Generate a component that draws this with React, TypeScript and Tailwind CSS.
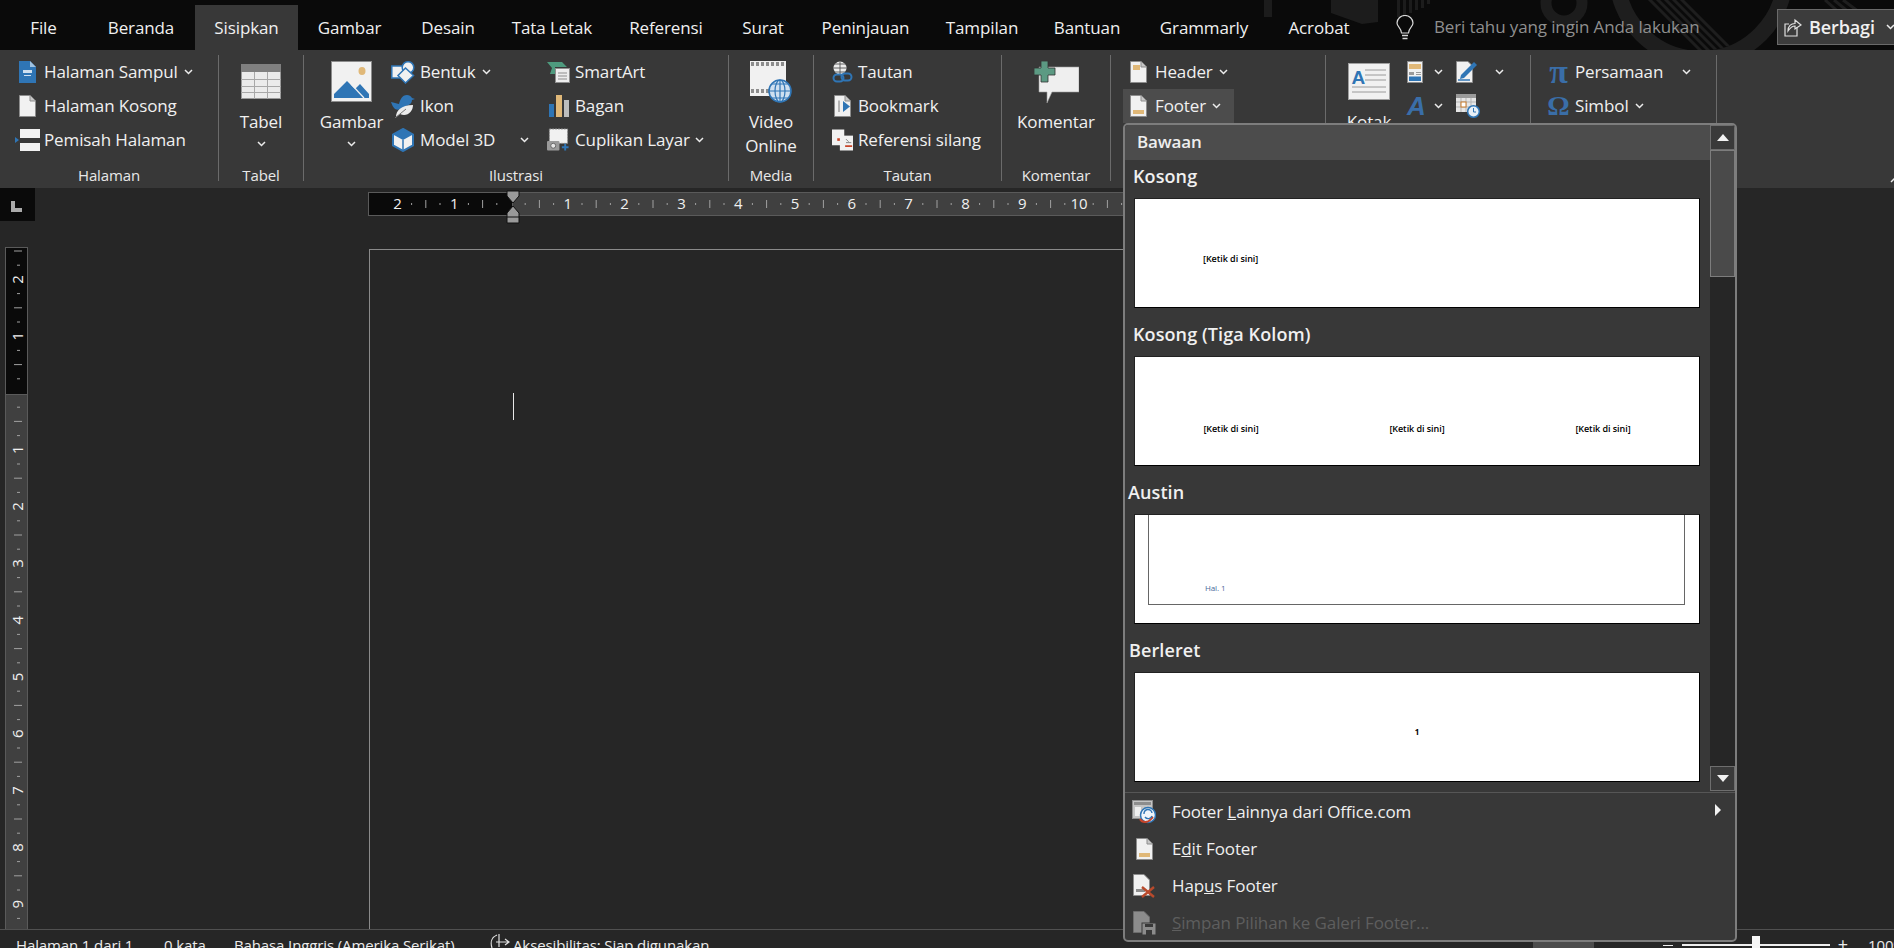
import React from "react";

const Chev = ({ className = "" }: { className?: string }) => (
  <svg width="9" height="6" viewBox="0 0 9 6" className={"shrink-0 " + className}>
    <polyline points="1,1 4.5,4.5 8,1" fill="none" stroke="#ececec" strokeWidth="1.5" />
  </svg>
);

const Sep = () => <div className="w-px shrink-0 mt-[5px] mb-[7px] bg-[#6b6b6b]" />;

const PageBase = ({ children }: { children?: React.ReactNode }) => (
  <svg width="17" height="22" viewBox="0 0 17 22">
    <path d="M0.5 0.5H11L16.5 6V21.5H0.5Z" fill="#f1f1f1" stroke="#8d8d8d" />
    <path d="M11 0.5V6H16.5" fill="#c8c8c8" stroke="#8d8d8d" />
    {children}
  </svg>
);

const CoverIcon = () => (
  <svg width="17" height="22" viewBox="0 0 17 22">
    <path d="M0 0H11L17 6V22H0Z" fill="#2f75b5" />
    <path d="M11 0V6H17Z" fill="#9fc1e0" />
    <rect x="4" y="9" width="9" height="3" fill="#cfe0f0" />
    <rect x="5" y="14" width="7" height="1" fill="#cfe0f0" />
  </svg>
);
const BreakIcon = () => (
  <svg width="25" height="22" viewBox="0 0 25 22">
    <path d="M0 8L4 11L0 14Z" fill="#2f75b5" />
    <rect x="5" y="0" width="20" height="9" fill="#f1f1f1" />
    <rect x="5" y="14" width="20" height="8" fill="#f1f1f1" />
  </svg>
);
const TableIcon = () => (
  <svg width="40" height="35" viewBox="0 0 40 35">
    <rect x="0.5" y="0.5" width="39" height="34" fill="#ebebeb" stroke="#9a9a9a" />
    <rect x="0" y="0" width="40" height="8" fill="#7f7f7f" />
    <path d="M13.5 8V35M26.5 8V35M0 15.5H40M0 22.5H40M0 28.5H40" stroke="#a8a8a8" fill="none" />
  </svg>
);
const PictureIcon = () => (
  <svg width="41" height="41" viewBox="0 0 41 41">
    <rect x="0.5" y="0.5" width="40" height="40" fill="#f1f1f1" stroke="#8d8d8d" />
    <ellipse cx="31" cy="10" rx="3.5" ry="4" fill="#e0b878" />
    <path d="M3 37V33L16 20L24 28L29 23L38 33V37Z" fill="#2f75b5" />
    <path d="M20 23L33 37" stroke="#f1f1f1" strokeWidth="1.2" />
  </svg>
);
const ShapesIcon = () => (
  <svg width="24" height="23" viewBox="0 0 24 23">
    <rect x="0.8" y="5" width="12" height="12" fill="#f1f1f1" stroke="#2f75b5" strokeWidth="1.5" />
    <circle cx="17" cy="6.5" r="5.8" fill="#f1f1f1" stroke="#2f75b5" strokeWidth="1.5" />
    <path d="M14.5 7L22.5 14.5L14.5 22L7 14.5Z" fill="#f1f1f1" stroke="#2f75b5" strokeWidth="1.5" />
  </svg>
);
const BirdIcon = () => (
  <svg width="24" height="24" viewBox="0 0 24 24">
    <path d="M0 8C3 9 5 9 8 10C9 6 11 1 16 1C18 1 20 2 21 4L24 5L21 6C21 9 19 11 15 12C12 15 7 17 4 15C2 13 1 11 0 8Z" fill="#2f75b5" />
    <path d="M5 23C5 17 10 11 22 11C22 18 16 23 9 20Z" fill="#ececec" />
    <path d="M4 24L15 15" stroke="#777" strokeWidth="1" />
  </svg>
);
const CubeIcon = () => (
  <svg width="22" height="24" viewBox="0 0 22 24">
    <path d="M11 1L21 6.5V17.5L11 23L1 17.5V6.5Z" fill="#f1f1f1" stroke="#2f75b5" strokeWidth="2" />
    <path d="M11 1L21 6.5L11 12L1 6.5Z" fill="#2f75b5" />
    <path d="M11 12V23" stroke="#2f75b5" strokeWidth="1.5" />
  </svg>
);
const SmartArtIcon = () => (
  <svg width="23" height="22" viewBox="0 0 23 22">
    <path d="M0 1H15L20 6H8V13H3L5 7Z" fill="#4e9a7e" />
    <rect x="8.5" y="7.5" width="14" height="14" fill="#ededed" stroke="#8d8d8d" />
    <path d="M11 12H20M11 15H20M11 18H20" stroke="#8d8d8d" />
  </svg>
);
const ChartIcon = () => (
  <svg width="20" height="22" viewBox="0 0 20 22">
    <rect x="0" y="9" width="5" height="13" fill="#2f75b5" />
    <rect x="7" y="0" width="6" height="22" fill="#e0b878" />
    <rect x="15" y="5" width="5" height="17" fill="#bdbdbd" />
  </svg>
);
const ScreenIcon = () => (
  <svg width="24" height="24" viewBox="0 0 24 24">
    <rect x="2.5" y="0.5" width="19" height="15" fill="#f1f1f1" stroke="#8d8d8d" strokeDasharray="2 1" />
    <rect x="0" y="13" width="13" height="10" rx="1" fill="#9a9a9a" />
    <circle cx="6.5" cy="18" r="2.6" fill="#e5e5e5" stroke="#666" />
    <path d="M19 16V23M15.5 19.5H22.5" stroke="#2f75b5" strokeWidth="2" />
  </svg>
);
const VideoIcon = () => (
  <svg width="42" height="42" viewBox="0 0 42 42">
    <rect x="0" y="0" width="36" height="35" fill="#f1f1f1" />
    <path d="M1 3H35M1 30H35" stroke="#8d8d8d" strokeWidth="4" strokeDasharray="3 2" />
    <circle cx="30" cy="30" r="11" fill="#cfe0f0" stroke="#2f75b5" strokeWidth="1.6" />
    <path d="M19 30H41M30 19V41M22 23H38M22 37H38" stroke="#2f75b5" strokeWidth="1.2" />
    <ellipse cx="30" cy="30" rx="5" ry="11" fill="none" stroke="#2f75b5" strokeWidth="1.2" />
  </svg>
);
const LinkIcon = () => (
  <svg width="21" height="23" viewBox="0 0 21 23">
    <circle cx="8" cy="7" r="6.5" fill="#ececec" />
    <path d="M1.5 7H14.5M8 0.5V13.5M3 3H13M3 11H13" stroke="#555" strokeWidth="0.9" />
    <rect x="1.5" y="13.5" width="10" height="7" rx="3.5" fill="none" stroke="#2f75b5" strokeWidth="2" />
    <rect x="9.5" y="13.5" width="10" height="7" rx="3.5" fill="none" stroke="#2f75b5" strokeWidth="2" transform="translate(0 -1)" />
  </svg>
);
const BookmarkIcon = () => (
  <svg width="17" height="22" viewBox="0 0 17 22">
    <path d="M0.5 0.5H11L16.5 6V21.5H0.5Z" fill="#f1f1f1" stroke="#8d8d8d" />
    <path d="M11 0.5V6H16.5" fill="#c8c8c8" stroke="#8d8d8d" />
    <path d="M5 5.5V17" stroke="#777" />
    <path d="M9 6L16 11.5L9 17Z" fill="#2f75b5" />
  </svg>
);
const CrossRefIcon = () => (
  <svg width="24" height="24" viewBox="0 0 24 24">
    <rect x="0" y="0" width="14" height="18" fill="#f1f1f1" />
    <rect x="6" y="10" width="6" height="3" fill="#c8452a" />
    <path d="M9 7H24V24H9Z" fill="#f1f1f1" />
    <path d="M16 11L19 14M16 15H22" stroke="#777" />
    <rect x="15" y="18" width="8" height="2" fill="#c8452a" />
  </svg>
);
const CommentIcon = () => (
  <svg width="45" height="42" viewBox="0 0 45 42">
    <path d="M5 6H45V31H18L13 42V31H5Z" fill="#efefef" stroke="#9a9a9a" strokeWidth="0.6" strokeLinejoin="round" />
    <path d="M7 0H14V7H21V14H14V21H7V14H0V7H7Z" fill="#5c9a83" stroke="#333" strokeWidth="0.8" />
  </svg>
);
const HeaderIcon = () => (
  <PageBase>
    <rect x="3" y="4" width="7" height="5" fill="#e0b878" />
  </PageBase>
);
const FooterIcon = () => (
  <PageBase>
    <rect x="3" y="15" width="11" height="4" fill="#e0b878" />
  </PageBase>
);
const TextBoxIcon = () => (
  <svg width="42" height="37" viewBox="0 0 42 37">
    <rect x="0.5" y="0.5" width="41" height="36" fill="#f1f1f1" stroke="#a0a0a0" />
    <path d="M17 7H38M17 12H38M17 17H38M4 24H38M4 29H38" stroke="#9a9a9a" />
    <text x="3.5" y="21" className="fill-[#2f75b5] text-[19px] font-bold font-['Liberation_Sans',sans-serif]">A</text>
  </svg>
);
const QuickIcon = () => (
  <svg width="16" height="22" viewBox="0 0 16 22">
    <rect x="0.5" y="0.5" width="15" height="21" fill="#f1f1f1" stroke="#8d8d8d" />
    <rect x="2" y="3" width="12" height="5" fill="#e0b878" />
    <path d="M2 11H7V14H2ZM9 11H14V12H9ZM9 13H14V14H9Z" fill="#9a9a9a" />
    <rect x="2" y="15.5" width="12" height="4.5" fill="#2f75b5" />
  </svg>
);
const SignIcon = () => (
  <svg width="22" height="22" viewBox="0 0 22 22">
    <path d="M0.5 0.5H12L16.5 5V21.5H0.5Z" fill="#f1f1f1" stroke="#8d8d8d" />
    <path d="M5 14L18 1L21 4L8 17L4 18Z" fill="#2f75b5" />
    <path d="M2 19H14" stroke="#2f75b5" strokeWidth="1.5" />
  </svg>
);
const DateIcon = () => (
  <svg width="24" height="24" viewBox="0 0 24 24">
    <rect x="0" y="0" width="20" height="18" fill="#e6e6e6" />
    <rect x="0" y="0" width="20" height="4" fill="#9a9a9a" />
    <path d="M5 4V18M10 4V18M15 4V18M0 8H20M0 13H20" stroke="#b5b5b5" />
    <rect x="5" y="8" width="5" height="5" fill="#fff" stroke="#c87a2a" />
    <circle cx="17.5" cy="17.5" r="5.8" fill="#e8f0f8" stroke="#2f75b5" strokeWidth="1.5" />
    <path d="M17.5 14V18H20" stroke="#2f75b5" fill="none" />
  </svg>
);
const Bulb = () => (
  <svg width="18" height="25" viewBox="0 0 18 25" fill="none" stroke="#d8d8d8" strokeWidth="1.2">
    <path d="M5.5 18C5.5 13 1 12 1 8A8 7.5 0 0 1 17 8C17 12 12.5 13 12.5 18Z" />
    <path d="M6 20.5H12M6.5 23.5H11.5" strokeWidth="1.6" />
  </svg>
);
const ShareIcon = () => (
  <svg width="18" height="20" viewBox="0 0 18 20" fill="none" stroke="#e0e0e0" strokeWidth="1.2">
    <path d="M13 10V19H1V7H5" />
    <path d="M4 14C4 9 7 6.5 11 6.5V3L17 8L11 12V9C8 9 6 11 4 14Z" />
  </svg>
);
const StoreIcon = () => (
  <svg width="24" height="24" viewBox="0 0 24 24">
    <rect x="0.5" y="0.5" width="20" height="18" fill="#c4c4c4" stroke="#8d8d8d" />
    <rect x="2" y="2" width="17" height="3" fill="#8d8d8d" />
    <rect x="3" y="7" width="6" height="9" fill="#efefef" />
    <circle cx="16" cy="15" r="7.5" fill="#f0f5fa" stroke="#2f75b5" strokeWidth="1.5" />
    <path d="M8 19C10 23 16 23 19 19L21 17" stroke="#c8452a" strokeWidth="2" fill="none" />
    <path d="M12 14A4 4 0 0 1 20 13M20 16A4 4 0 0 1 13 17" stroke="#2f75b5" strokeWidth="1.4" fill="none" />
  </svg>
);
const FooterXIcon = () => (
  <svg width="23" height="24" viewBox="0 0 23 24">
    <path d="M0.5 0.5H11L16.5 6V21.5H0.5Z" fill="#f1f1f1" stroke="#8d8d8d" />
    <rect x="3" y="15" width="9" height="3" fill="#8d8d8d" />
    <path d="M9 13L21 23M21 13L9 23" stroke="#b84a2c" strokeWidth="2.4" />
  </svg>
);
const FooterSaveIcon = () => (
  <svg width="23" height="24" viewBox="0 0 23 24">
    <path d="M0.5 0.5H11L16.5 6V21.5H0.5Z" fill="#8c8c8c" stroke="#6d6d6d" />
    <rect x="9" y="12" width="14" height="12" fill="#8c8c8c" stroke="#383838" />
    <rect x="12" y="13" width="8" height="3" fill="#383838" />
    <rect x="13" y="19" width="6" height="5" fill="#383838" />
  </svg>
);
const TriUp = () => (
  <svg width="12" height="7" viewBox="0 0 12 7"><path d="M0 7L6 0L12 7Z" fill="#f2f2f2" /></svg>
);
const TriDown = () => (
  <svg width="12" height="7" viewBox="0 0 12 7"><path d="M0 0L6 7L12 0Z" fill="#f2f2f2" /></svg>
);

const tabs: [string, string][] = [
  ["File", "w-[87px]"],
  ["Beranda", "w-[108px]"],
  ["Sisipkan", "w-[103px] bg-[#383838]"],
  ["Gambar", "w-[103px]"],
  ["Desain", "w-[94px]"],
  ["Tata Letak", "w-[114px]"],
  ["Referensi", "w-[114px]"],
  ["Surat", "w-[80px] mr-[8px]"],
  ["Peninjauan", "w-[109px]"],
  ["Tampilan", "w-[124px]"],
  ["Bantuan", "w-[86px]"],
  ["Grammarly", "w-[148px]"],
  ["Acrobat", "w-[82px]"],
];

const Row = ({
  slot,
  icon,
  label,
  children,
  className = "",
}: {
  slot: string;
  icon: React.ReactNode;
  label: string;
  children?: React.ReactNode;
  className?: string;
}) => (
  <div className={"flex items-center h-[34px] whitespace-nowrap " + className}>
    <div className={"flex justify-center items-center shrink-0 " + slot}>{icon}</div>
    <span>{label}</span>
    {children}
  </div>
);

const Big = ({
  icon,
  lines,
  chev,
  className = "",
}: {
  icon: React.ReactNode;
  lines: string[];
  chev?: boolean;
  className?: string;
}) => (
  <div className={"flex flex-col items-center shrink-0 " + className}>
    <div className="h-[53px] mb-[2px] flex items-center justify-center">{icon}</div>
    {lines.map((l) => (
      <div key={l} className="leading-[24px] h-[24px] whitespace-nowrap">{l}</div>
    ))}
    {chev && (
      <div className="h-[20px] flex items-center">
        <Chev />
      </div>
    )}
  </div>
);

const Group = ({
  width,
  label,
  children,
}: {
  width: string;
  label?: string;
  children: React.ReactNode;
}) => (
  <div className={"shrink-0 flex flex-col h-full " + width}>
    <div className="flex-1 flex pt-[5px] min-h-0">{children}</div>
    <div className="h-[24px] leading-[22px] text-center text-[15px] text-[#e8e8e8]">{label}</div>
  </div>
);

const HRuler = () => {
  const zero = 143;
  const step = 56.8;
  const marks = [];
  for (let q = -8; q <= 44; q++) {
    const x = zero + (q * step) / 4;
    if (x < 0) continue;
    if (q % 4 === 0) {
      const n = Math.abs(q / 4);
      if (n > 0) {
        marks.push(
          <text key={q} x={x} y={17} textAnchor="middle" className="fill-[#f0f0f0] text-[15px]">
            {n}
          </text>
        );
      }
    } else if (q % 2 === 0) {
      marks.push(<line key={q} x1={x} x2={x} y1={8} y2={16} stroke="#a0a0a0" />);
    } else {
      marks.push(<line key={q} x1={x} x2={x} y1={11} y2={13} stroke="#a0a0a0" />);
    }
  }
  return (
    <svg width="800" height="24" viewBox="0 0 800 24" className="block">
      <rect x="0.5" y="0.5" width="799" height="23" fill="#404040" stroke="#5a5a5a" />
      <rect x="0.5" y="0.5" width="144" height="23" fill="#0a0a0a" stroke="#5a5a5a" />
      {marks}
    </svg>
  );
};

const VRuler = () => {
  const zero = 146;
  const step = 56.8;
  const marks = [];
  for (let q = -10; q <= 40; q++) {
    const y = zero + (q * step) / 4;
    if (y < 0 || y > 682) continue;
    if (q % 4 === 0) {
      const n = Math.abs(q / 4);
      if (n > 0) {
        marks.push(
          <text
            key={q}
            x={12}
            y={y}
            textAnchor="middle"
            dominantBaseline="central"
            transform={`rotate(-90 12 ${y})`}
            className="fill-[#f0f0f0] text-[15px]"
          >
            {n}
          </text>
        );
      }
    } else if (q % 2 === 0) {
      marks.push(<line key={q} x1={9} x2={17} y1={y} y2={y} stroke="#a0a0a0" />);
    } else {
      marks.push(<line key={q} x1={12} x2={15} y1={y} y2={y} stroke="#a0a0a0" />);
    }
  }
  return (
    <svg width="23" height="682" viewBox="0 0 23 682" className="block">
      <rect x="0.5" y="0.5" width="22" height="700" fill="#404040" stroke="#5a5a5a" />
      <rect x="0.5" y="0.5" width="22" height="147" fill="#0a0a0a" stroke="#5a5a5a" />
      {marks}
    </svg>
  );
};

const Section = ({
  title,
  first,
  pl,
  children,
}: {
  title: string;
  first?: boolean;
  pl: string;
  children: React.ReactNode;
}) => (
  <div>
    <div
      className={
        "flex items-center font-semibold text-[18px] tracking-[0.1px] text-[#f0f0f0] " +
        pl +
        (first ? " h-[38px] pb-[5px]" : " h-[48px] pt-[4px]")
      }
    >
      {title}
    </div>
    <div className="ml-[9px] w-[566px] h-[110px] bg-white border-b border-r border-l border-t border-l-[#222] border-t-[#222] border-r-black border-b-black text-black overflow-hidden">
      {children}
    </div>
  </div>
);

const MenuItem = ({
  icon,
  children,
  disabled,
  arrow,
}: {
  icon: React.ReactNode;
  children: React.ReactNode;
  disabled?: boolean;
  arrow?: boolean;
}) => (
  <div className={"flex items-center h-[37px] shrink-0 text-[17px] " + (disabled ? "text-[#5e5e5e]" : "text-[#efefef]")}>
    <div className="w-[24px] ml-[7px] mr-[16px] flex justify-center shrink-0">{icon}</div>
    <span>{children}</span>
    {arrow && (
      <svg width="6" height="12" viewBox="0 0 6 12" className="ml-auto mr-[14px] mb-[4px]">
        <path d="M0 0L6 6L0 12Z" fill="#f2f2f2" />
      </svg>
    )}
  </div>
);

const Dropdown = () => (
  <div className="absolute left-[1123px] top-[123px] w-[614px] h-[819px] border-2 border-[#7d7d7d] rounded-[5px] bg-[#383838] flex flex-col overflow-hidden z-10">
    <div className="flex h-[667px] shrink-0">
      <div className="w-[585px] shrink-0 overflow-hidden">
        <div className="h-[35px] bg-[#4c4c4c] flex items-center pl-[12px] pb-[2px] font-semibold text-[17px] text-[#eeeeee]">Bawaan</div>
        <Section title="Kosong" first pl="pl-[8px]">
          <div className="pl-[68px] pt-[53px] text-[9px] font-semibold tracking-[-0.05px] leading-[14px]">[Ketik di sini]</div>
        </Section>
        <Section title="Kosong (Tiga Kolom)" pl="pl-[8px]">
          <div className="grid grid-cols-3 px-[3px] pt-[65px] text-center text-[9px] font-semibold tracking-[-0.05px] leading-[14px]">
            <span>[Ketik di sini]</span>
            <span>[Ketik di sini]</span>
            <span>[Ketik di sini]</span>
          </div>
        </Section>
        <Section title="Austin" pl="pl-[3px]">
          <div className="ml-[13px] mr-[14px] h-[90px] border-x border-b border-[#666] pl-[56px] pt-[67px] text-[8px] leading-[12px] text-[#4a6a9a]">Hal. 1</div>
        </Section>
        <Section title="Berleret" pl="pl-[4px]">
          <div className="pt-[53px] text-center text-[8px] font-bold leading-[12px]">1</div>
        </Section>
      </div>
      <div className="w-[25px] ml-auto flex flex-col shrink-0 h-[666px]">
        <div className="h-[25px] shrink-0 border border-[#6e6e6e] bg-[#3a3a3a] flex items-center justify-center"><TriUp /></div>
        <div className="h-[127px] shrink-0 border border-[#7d7d7d] bg-[#4a4a4a]" />
        <div className="flex-1 bg-[#262626]" />
        <div className="h-[25px] shrink-0 border border-[#6e6e6e] bg-[#3a3a3a] flex items-center justify-center"><TriDown /></div>
      </div>
    </div>
    <div className="border-t border-[#565656] shrink-0 flex flex-col">
      <MenuItem icon={<StoreIcon />} arrow>
        Footer <span className="underline">L</span>ainnya dari Office.com
      </MenuItem>
      <MenuItem icon={<FooterIcon />}>
        E<span className="underline">d</span>it Footer
      </MenuItem>
      <MenuItem icon={<FooterXIcon />}>
        Hap<span className="underline">u</span>s Footer
      </MenuItem>
      <MenuItem icon={<FooterSaveIcon />} disabled>
        <span className="underline">S</span>impan Pilihan ke Galeri Footer...
      </MenuItem>
    </div>
  </div>
);

export default function App() {
  return (
    <div className="relative w-[1894px] h-[948px] overflow-hidden flex flex-col bg-[#262626] text-[#f0f0f0] text-[17px] tracking-[-0.12px] font-['Open_Sans','Noto_Sans',sans-serif]">
      {/* Tab bar */}
      <div className="relative h-[50px] shrink-0 bg-[#0a0a0a] flex items-end overflow-hidden">
        <svg width="1894" height="50" viewBox="0 0 1894 50" className="absolute left-0 top-0">
          <defs>
            <clipPath id="inner"><circle cx="1701" cy="-25" r="76" /></clipPath>
          </defs>
          <g fill="#1c1c1c">
            <rect x="1264" y="0" width="8" height="17" />
            <path d="M1331 0V13L1362 24L1378 22V0Z" />
            <path d="M1397 0H1400V17H1397ZM1403 0H1406V15H1403ZM1409 0H1412V13H1409ZM1415 0H1418V10H1415ZM1421 0H1424V8H1421ZM1427 0H1430V4H1427Z" />
          </g>
          <circle cx="1564" cy="3" r="18" fill="none" stroke="#1c1c1c" strokeWidth="11" />
          <circle cx="1701" cy="-25" r="84" fill="none" stroke="#1e1e1e" strokeWidth="16" />
          <g clipPath="url(#inner)" stroke="#1e1e1e" strokeWidth="3">
            <path d="M1640 -10L1720 70M1648 -10L1728 70M1656 -10L1736 70M1664 -10L1744 70M1672 -10L1752 70" />
          </g>
          <path d="M1825 0L1870 40M1834 0L1878 36M1843 0L1886 32" stroke="#1e1e1e" strokeWidth="3" />
        </svg>
        <div className="relative flex items-end w-full">
          {tabs.map(([t, c]) => (
            <div key={t} className={"h-[45px] flex items-center justify-center shrink-0 " + c}>{t}</div>
          ))}
          <div className="ml-[36px] mb-[10px] shrink-0"><Bulb /></div>
          <span className="ml-[20px] mb-[11px] leading-[24px] text-[#8f8f8f] whitespace-nowrap">Beri tahu yang ingin Anda lakukan</span>
          <div className="ml-auto -mr-[8px] mb-[5px] shrink-0 w-[125px] h-[36px] border border-[#6a6a6a] bg-[#3c3c3c] flex items-center pl-[6px] gap-[7px]">
            <ShareIcon />
            <span className="font-semibold text-[18px]">Berbagi</span>
            <Chev className="ml-[4px]" />
          </div>
        </div>
      </div>

      {/* Ribbon */}
      <div className="h-[138px] shrink-0 bg-[#383838] flex">
        <Group width="w-[218px]" label="Halaman">
          <div className="pl-[15px] w-full">
            <Row slot="w-[25px] mr-[4px]" icon={<CoverIcon />} label="Halaman Sampul"><Chev className="ml-[6px]" /></Row>
            <Row slot="w-[25px] mr-[4px]" icon={<PageBase />} label="Halaman Kosong" />
            <Row slot="w-[25px] mr-[4px]" icon={<BreakIcon />} label="Pemisah Halaman" />
          </div>
        </Group>
        <Sep />
        <Group width="w-[84px]" label="Tabel">
          <Big icon={<TableIcon />} lines={["Tabel"]} chev className="w-full" />
        </Group>
        <Sep />
        <Group width="w-[424px]" label="Ilustrasi">
          <Big icon={<PictureIcon />} lines={["Gambar"]} chev className="ml-[12px] w-[71px]" />
          <div className="w-[160px] shrink-0 pl-[4px]">
            <Row slot="w-[24px] mr-[5px]" icon={<ShapesIcon />} label="Bentuk"><Chev className="ml-[6px]" /></Row>
            <Row slot="w-[24px] mr-[5px]" icon={<BirdIcon />} label="Ikon" />
            <Row slot="w-[24px] mr-[5px]" icon={<CubeIcon />} label="Model 3D"><Chev className="ml-auto mr-[18px]" /></Row>
          </div>
          <div className="flex-1">
            <Row slot="w-[23px] mr-[5px]" icon={<SmartArtIcon />} label="SmartArt" />
            <Row slot="w-[23px] mr-[5px]" icon={<ChartIcon />} label="Bagan" />
            <Row slot="w-[23px] mr-[5px]" icon={<ScreenIcon />} label="Cuplikan Layar"><Chev className="ml-[5px]" /></Row>
          </div>
        </Group>
        <Sep />
        <Group width="w-[84px]" label="Media">
          <Big icon={<VideoIcon />} lines={["Video", "Online"]} className="w-full" />
        </Group>
        <Sep />
        <Group width="w-[187px]" label="Tautan">
          <div className="pl-[18px]">
            <Row slot="w-[21px] mr-[5px]" icon={<LinkIcon />} label="Tautan" />
            <Row slot="w-[21px] mr-[5px]" icon={<BookmarkIcon />} label="Bookmark" />
            <Row slot="w-[21px] mr-[5px]" icon={<CrossRefIcon />} label="Referensi silang" />
          </div>
        </Group>
        <Sep />
        <Group width="w-[108px]" label="Komentar">
          <Big icon={<CommentIcon />} lines={["Komentar"]} className="w-full" />
        </Group>
        <Sep />
        <Group width="w-[214px]">
          <div className="ml-[12px] w-[111px] shrink-0">
            <Row slot="w-[17px] mr-[8px]" icon={<HeaderIcon />} label="Header" className="pl-[7px]"><Chev className="ml-[6px]" /></Row>
            <Row slot="w-[17px] mr-[8px]" icon={<FooterIcon />} label="Footer" className="pl-[7px] bg-[#4c4c4c]"><Chev className="ml-[6px]" /></Row>
          </div>
        </Group>
        <Sep />
        <Group width="w-[204px]">
          <Big icon={<TextBoxIcon />} lines={["Kotak"]} className="ml-[12px] w-[62px]" />
          <div className="ml-[7px] shrink-0">
            <div className="flex items-center h-[34px]">
              <div className="w-[49px] flex items-center"><QuickIcon /><Chev className="ml-[11px]" /></div>
              <div className="flex items-center"><SignIcon /><Chev className="ml-[17px]" /></div>
            </div>
            <div className="flex items-center h-[34px]">
              <div className="w-[49px] flex items-center">
                <span className="w-[16px] text-center italic font-bold text-[26px] leading-[30px] text-[#3a6ea8] font-['Liberation_Sans',sans-serif]">A</span>
                <Chev className="ml-[11px]" />
              </div>
              <DateIcon />
            </div>
          </div>
        </Group>
        <Sep />
        <Group width="w-[185px]">
          <div className="pl-[18px] w-full">
            <Row slot="w-[19px] mr-[7px]" icon={<span className="text-[34px] font-bold leading-[34px] text-[#3a6ea8] font-['Liberation_Serif',serif]">π</span>} label="Persamaan"><Chev className="ml-auto mr-[25px]" /></Row>
            <Row slot="w-[19px] mr-[7px]" icon={<span className="text-[28px] font-bold leading-[34px] text-[#3a6ea8] font-['Liberation_Serif',serif]">Ω</span>} label="Simbol"><Chev className="ml-[6px]" /></Row>
          </div>
        </Group>
        <Sep />
        <div className="flex-1 flex justify-end items-end pb-[5px]">
          <svg width="9" height="6" viewBox="0 0 9 6" className="-mr-[5px]">
            <polyline points="1,5 4.5,1.5 8,5" fill="none" stroke="#ececec" strokeWidth="1.5" />
          </svg>
        </div>
      </div>

      {/* Document area */}
      <div className="flex-1 min-h-0 flex flex-col">
        <div className="h-[59px] shrink-0 flex items-start">
          <div className="w-[35px] h-[33px] bg-[#0a0a0a] shrink-0 flex items-center justify-center">
            <svg width="11" height="11" viewBox="0 0 11 11" className="mt-[3px] -ml-[3px]">
              <path d="M0 0H4V7H11V11H0Z" fill="#ababab" />
            </svg>
          </div>
          <div className="relative ml-[333px] mt-[4px] shrink-0">
            <HRuler />
            <svg width="14" height="34" viewBox="0 0 14 34" className="absolute left-[138px] -top-[2px]">
              <path d="M1 1H13V6L7 13L1 6Z" fill="#9a9a9a" stroke="#111" />
              <path d="M7 16L13 23V33H1V23Z" fill="#9a9a9a" stroke="#111" />
              <path d="M1 27H13" stroke="#111" />
            </svg>
          </div>
        </div>
        <div className="flex-1 min-h-0 flex">
          <div className="ml-[5px] w-[23px] shrink-0"><VRuler /></div>
          <div className="relative ml-[341px] mt-[2px] w-[900px] border-l border-t border-[#8a8a8a] shrink-0">
            <div className="absolute left-[143px] top-[143px] w-px h-[27px] bg-[#e8e8e8]" />
          </div>
        </div>
      </div>

      {/* Status bar */}
      <div className="h-[19px] shrink-0 border-t border-[#505050] flex items-start pt-[3px] text-[15px] leading-[24px] text-[#ececec] whitespace-nowrap">
        <span className="ml-[16px] w-[148px] shrink-0">Halaman 1 dari 1</span>
        <span className="w-[70px] shrink-0">0 kata</span>
        <span className="w-[255px] shrink-0">Bahasa Inggris (Amerika Serikat)</span>
        <svg width="22" height="22" viewBox="0 0 22 22" fill="none" stroke="#e0e0e0" strokeWidth="1.2" className="shrink-0 mt-[0px]">
          <path d="M8 2C3 4 1 9 3 15M10 1V14M7 9H19M16 6L20 9L16 12" />
        </svg>
        <span className="ml-[2px]">Aksesibilitas: Siap digunakan</span>
        <div className="ml-auto flex items-start shrink-0">
          <div className="w-[14px] h-[20px] mt-[4px] mr-[20px] border-t border-[#e0e0e0]" />
          <div className="w-[61px] h-[20px] -mt-[3px] bg-[#4c4c4c] flex justify-center pt-[6px]">
            <div className="w-[19px] h-[6px] border-t border-[#e0e0e0]" />
          </div>
          <div className="w-[20px] h-[20px] ml-[21px] mt-[4px] border-t border-[#e0e0e0]" />
          <div className="w-[10px] h-px bg-[#efefef] ml-[28px] mt-[12px]" />
          <div className="relative w-[148px] h-[2px] bg-[#efefef] ml-[9px] mt-[11px]">
            <div className="absolute left-[70px] -top-[8px] w-[8px] h-[16px] bg-[#f5f5f5]" />
          </div>
          <span className="ml-[8px] text-[18px] leading-[24px] -mt-[1px]">+</span>
          <span className="ml-[20px] w-[26px]">100%</span>
        </div>
      </div>

      <Dropdown />
    </div>
  );
}
